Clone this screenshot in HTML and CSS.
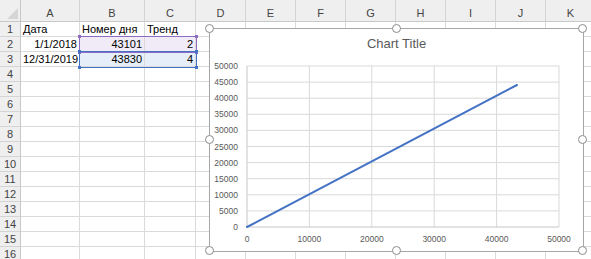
FILE: index.html
```html
<!DOCTYPE html>
<html lang="ru">
<head>
  <meta charset="utf-8" />
  <title>Chart Title</title>
  <link rel="stylesheet" href="styles.css">
</head>
<body>
  <div id="sheet">
    <div class="grid">
      <div class="corner"><span class="tri"></span></div>
      <div class="colhead">A</div><div class="colhead">B</div><div class="colhead">C</div><div class="colhead">D</div>
      <div class="colhead">E</div><div class="colhead">F</div><div class="colhead">G</div><div class="colhead">H</div>
      <div class="colhead">I</div><div class="colhead">J</div><div class="colhead">K</div>

      <div class="rowhead">1</div><div class="cell">Дата</div><div class="cell">Номер дня</div><div class="cell">Тренд</div>
      <div class="cell"></div><div class="cell"></div><div class="cell"></div><div class="cell"></div><div class="cell"></div><div class="cell"></div><div class="cell"></div><div class="cell"></div>

      <div class="rowhead">2</div><div class="cell num">1/1/2018</div><div class="cell num sel-x">43101</div><div class="cell num sel-x">2</div>
      <div class="cell"></div><div class="cell"></div><div class="cell"></div><div class="cell"></div><div class="cell"></div><div class="cell"></div><div class="cell"></div><div class="cell"></div>

      <div class="rowhead">3</div><div class="cell num">12/31/2019</div><div class="cell num sel-y">43830</div><div class="cell num sel-y">4</div>
      <div class="cell"></div><div class="cell"></div><div class="cell"></div><div class="cell"></div><div class="cell"></div><div class="cell"></div><div class="cell"></div><div class="cell"></div>
    </div>
    <div class="grid" id="empty-rows"></div>

    <div class="range range-x"><i class="h tl"></i><i class="h tr"></i><i class="h bl"></i><i class="h br"></i></div>
    <div class="range range-y"><i class="h tl"></i><i class="h tr"></i><i class="h bl"></i><i class="h br"></i></div>

    <div class="chart">
      <div class="chart-title">Chart Title</div>
      <svg class="plot" width="375" height="224" viewBox="0 0 375 224">
        <g class="gridlines">
          <line x1="38" y1="38" x2="350" y2="38" />
          <line x1="38" y1="54.1" x2="350" y2="54.1" />
          <line x1="38" y1="70.2" x2="350" y2="70.2" />
          <line x1="38" y1="86.3" x2="350" y2="86.3" />
          <line x1="38" y1="102.4" x2="350" y2="102.4" />
          <line x1="38" y1="118.5" x2="350" y2="118.5" />
          <line x1="38" y1="134.6" x2="350" y2="134.6" />
          <line x1="38" y1="150.7" x2="350" y2="150.7" />
          <line x1="38" y1="166.8" x2="350" y2="166.8" />
          <line x1="38" y1="182.9" x2="350" y2="182.9" />
          <line x1="100.4" y1="38" x2="100.4" y2="199" />
          <line x1="162.8" y1="38" x2="162.8" y2="199" />
          <line x1="225.2" y1="38" x2="225.2" y2="199" />
          <line x1="287.6" y1="38" x2="287.6" y2="199" />
          <line x1="350" y1="38" x2="350" y2="199" />
        </g>
        <g class="axes">
          <line x1="38" y1="199" x2="350" y2="199" />
          <line x1="38" y1="38" x2="38" y2="199" />
        </g>
        <g class="ylabels">
          <text x="29" y="41">50000</text>
          <text x="29" y="57.1">45000</text>
          <text x="29" y="73.2">40000</text>
          <text x="29" y="89.3">35000</text>
          <text x="29" y="105.4">30000</text>
          <text x="29" y="121.5">25000</text>
          <text x="29" y="137.6">20000</text>
          <text x="29" y="153.7">15000</text>
          <text x="29" y="169.8">10000</text>
          <text x="29" y="185.9">5000</text>
          <text x="29" y="202">0</text>
        </g>
        <g class="xlabels">
          <text x="38" y="214">0</text>
          <text x="100.4" y="214">10000</text>
          <text x="162.8" y="214">20000</text>
          <text x="225.2" y="214">30000</text>
          <text x="287.6" y="214">40000</text>
          <text x="350" y="214">50000</text>
        </g>
        <line class="series" x1="38" y1="199" x2="308" y2="57" />
      </svg>
      <i class="knob" style="left:0;top:0"></i>
      <i class="knob" style="left:50%;top:0"></i>
      <i class="knob" style="left:100%;top:0"></i>
      <i class="knob" style="left:0;top:50%"></i>
      <i class="knob" style="left:100%;top:50%"></i>
      <i class="knob" style="left:0;top:100%"></i>
      <i class="knob" style="left:50%;top:100%"></i>
      <i class="knob" style="left:100%;top:100%"></i>
    </div>
  </div>
  <script>
    // rows 4..16 are empty, build them instead of typing them out
    var rows = document.getElementById('empty-rows'), html = '';
    for (var r = 4; r <= 16; r++) {
      html += '<div class="rowhead">' + r + '</div>';
      for (var c = 0; c < 11; c++) html += '<div class="cell"></div>';
    }
    rows.innerHTML = html;
  </script>
</body>
</html>
```

FILE: styles.css
```css
html, body { margin: 0; padding: 0; background: #fff; overflow: hidden; }
body { font-family: "Liberation Sans", Arial, sans-serif; font-size: 11px; color: #000; }
#sheet { position: relative; width: 591px; height: 259px; overflow: hidden; }
.grid { display: grid; grid-template-columns: 21px 59px 65px 51px repeat(7, 50px) 50px; grid-auto-rows: 15px; width: 596px; }
.grid:first-child { grid-template-rows: 22px; }
.corner { background: #efefef; border-right: 1px solid #c8c8c8; border-bottom: 1px solid #c8c8c8; box-sizing: border-box; position: relative; }
.tri { position: absolute; right: 2px; bottom: 2px; width: 0; height: 0; border-left: 11px solid transparent; border-bottom: 11px solid #d6d6d6; }
.colhead { background: #efefef; color: #444; text-align: center; line-height: 27px; border-right: 1px solid #d4d4d4; border-bottom: 1px solid #c8c8c8; box-sizing: border-box; }
.rowhead { background: #efefef; color: #444; text-align: center; line-height: 15px; border-right: 1px solid #c8c8c8; border-bottom: 1px solid #d4d4d4; box-sizing: border-box; }
.cell { border-right: 1px solid #dadada; border-bottom: 1px solid #dadada; box-sizing: border-box; line-height: 15px; padding: 0 2px; white-space: nowrap; overflow: hidden; }
.num { text-align: right; }
.sel-x { background: #f0ebf7; }
.sel-y { background: #e6eef9; }

.range { position: absolute; left: 79px; width: 118px; height: 17px; box-sizing: border-box; }
.range-x { top: 36px; border: 1px solid #8e6cc4; }
.range-y { top: 51px; border: 1px solid #4472c4; }
.range .h { position: absolute; width: 3px; height: 3px; }
.range-x .h { background: #8e6cc4; }
.range-y .h { background: #4472c4; }
.h.tl { left: -2px; top: -2px; }
.h.tr { right: -2px; top: -2px; }
.h.bl { left: -2px; bottom: -2px; }
.h.br { right: -2px; bottom: -2px; }

.chart { position: absolute; left: 209px; top: 28px; width: 375px; height: 224px; background: #fff; border: 1px solid #a6a6a6; box-sizing: border-box; }
.chart-title { position: absolute; left: 0; right: 0; top: 7px; text-align: center; font-size: 13px; color: #595959; }
.plot { position: absolute; left: -1px; top: -1px; }
.gridlines line { stroke: #d9d9d9; stroke-width: 1; }
.axes line { stroke: #c6c6c6; stroke-width: 1; }
.plot text { font-family: "Liberation Sans", Arial, sans-serif; font-size: 8.5px; fill: #595959; }
.ylabels text { text-anchor: end; }
.xlabels text { text-anchor: middle; }
.series { stroke: #4472c4; stroke-width: 2; stroke-linecap: round; }
.knob { position: absolute; width: 7px; height: 7px; margin: -5px 0 0 -5px; border: 1px solid #8c8c8c; border-radius: 50%; background: #fff; }
```
